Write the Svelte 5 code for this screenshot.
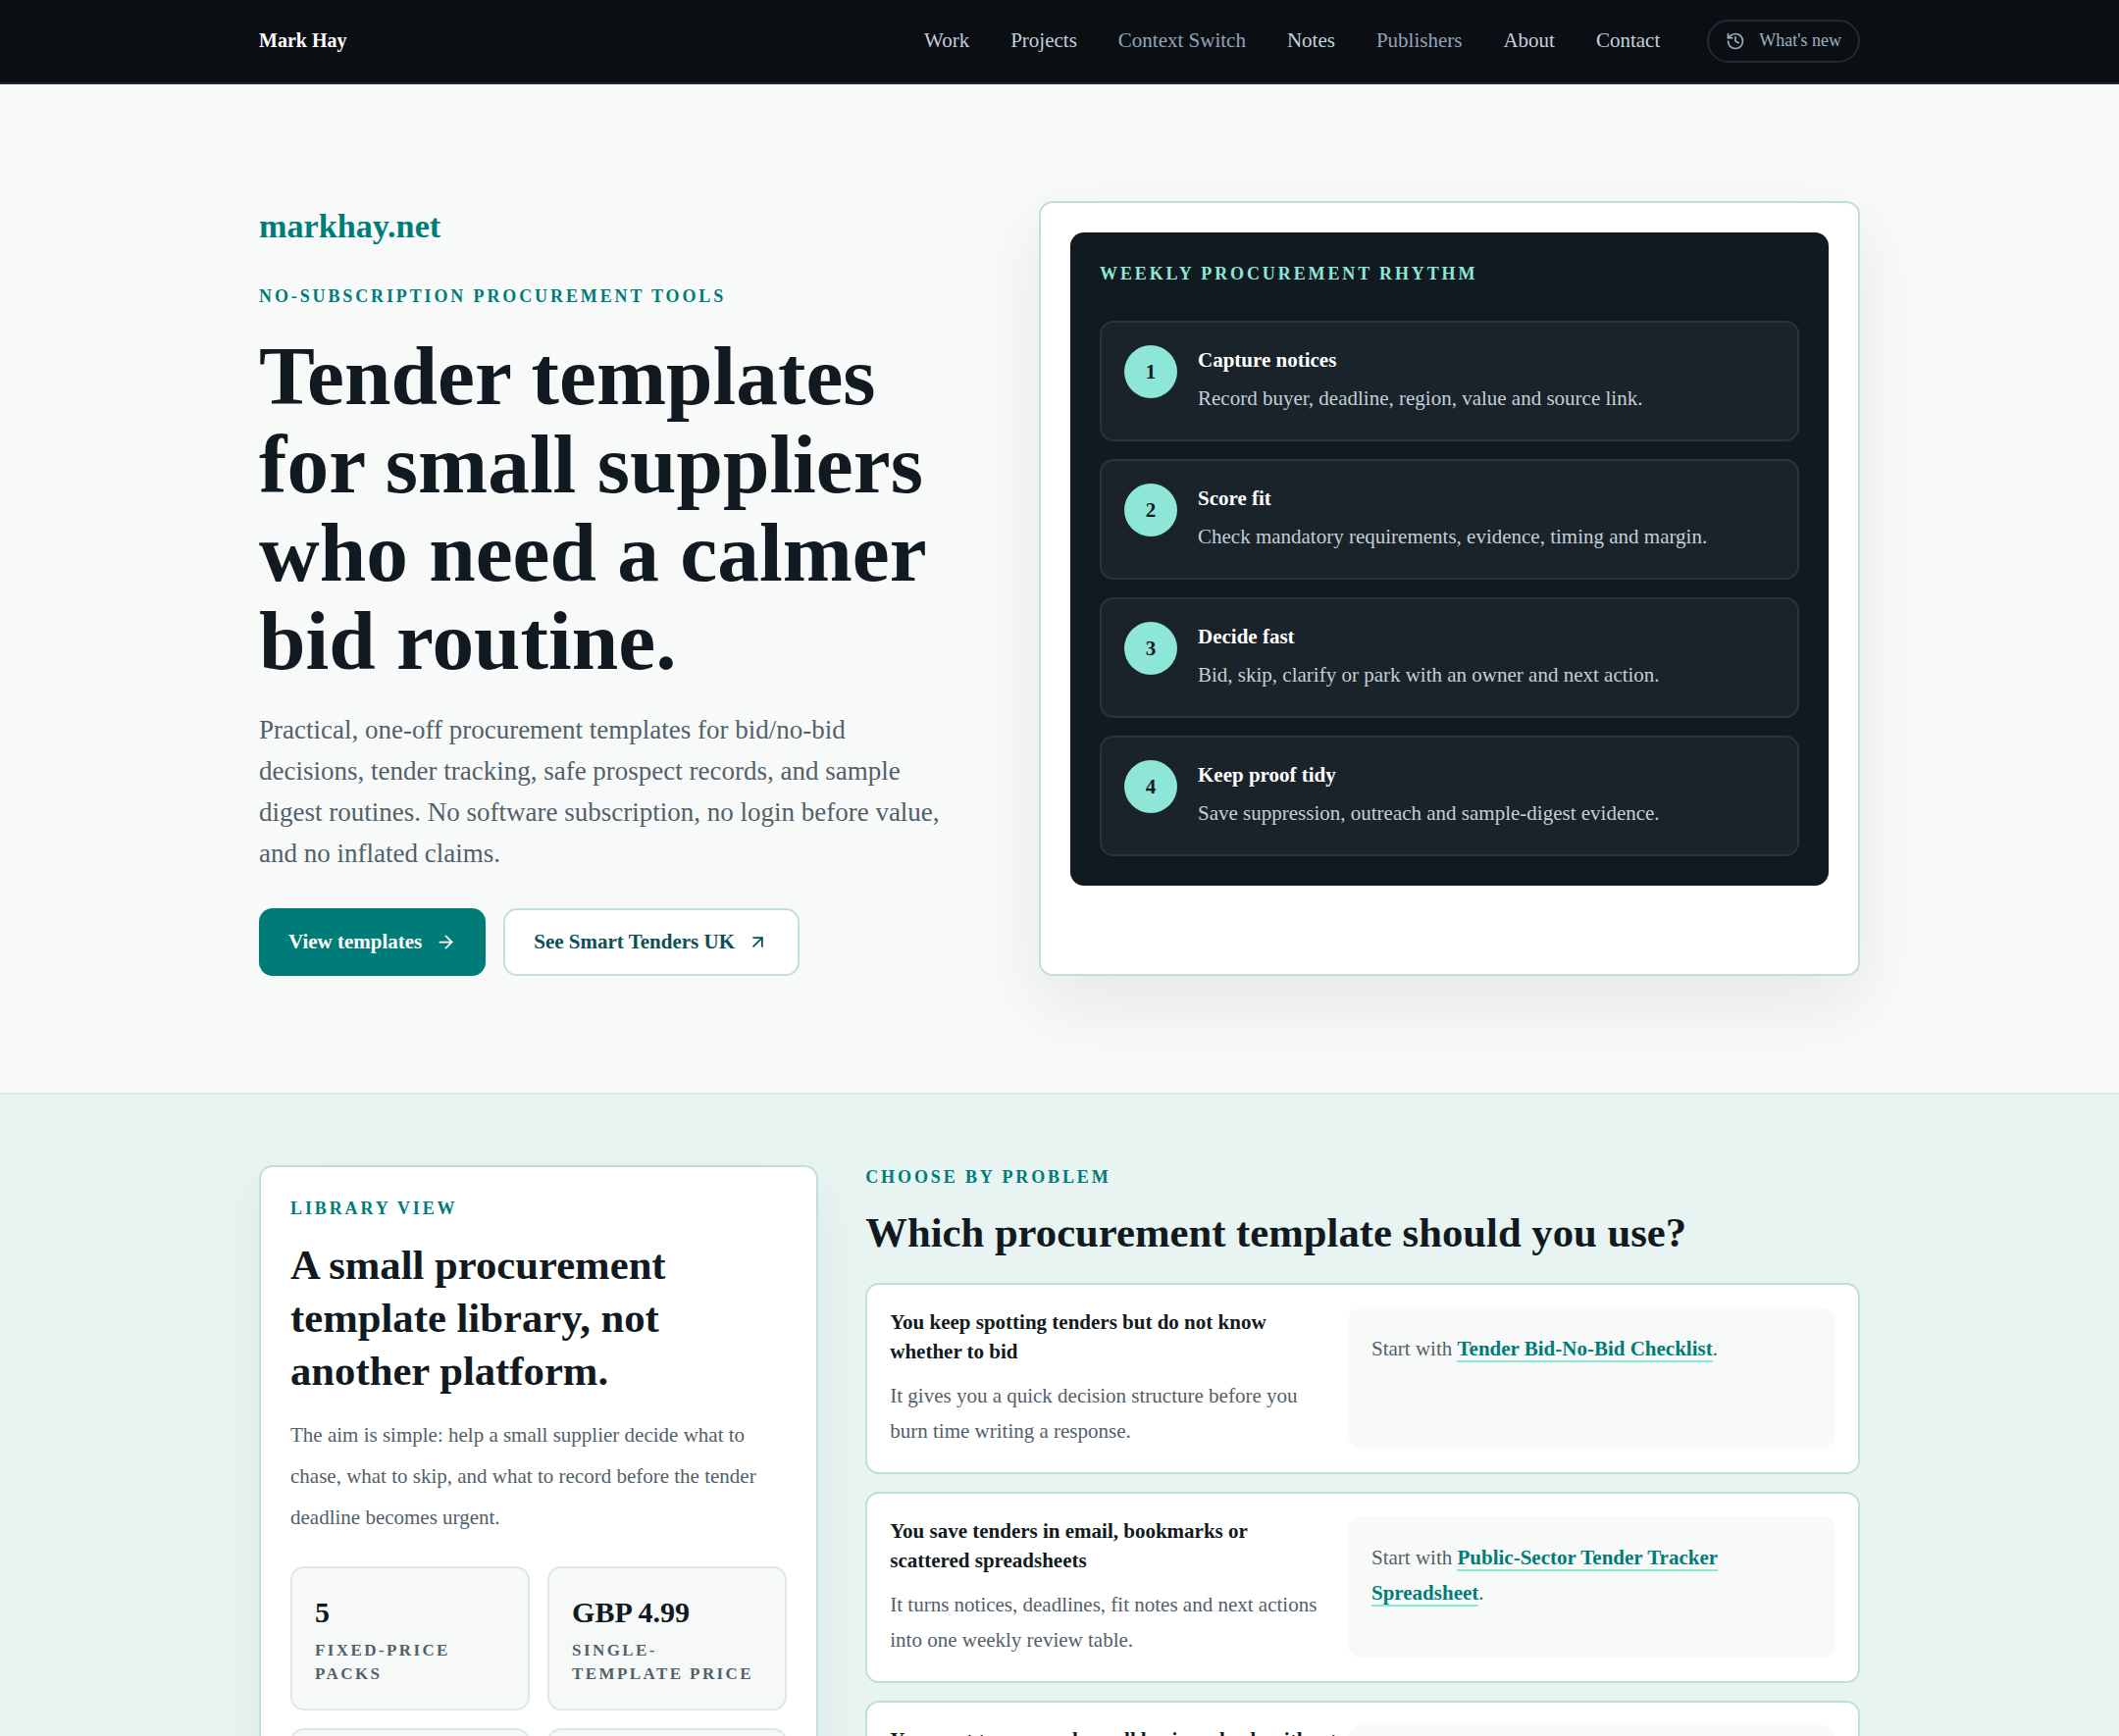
<script>
  const nav = [
    { t: 'Work', dim: false }, { t: 'Projects', dim: false }, { t: 'Context Switch', dim: true },
    { t: 'Notes', dim: false }, { t: 'Publishers', dim: true }, { t: 'About', dim: false }, { t: 'Contact', dim: false }
  ];
  const steps = [
    ['Capture notices', 'Record buyer, deadline, region, value and source link.'],
    ['Score fit', 'Check mandatory requirements, evidence, timing and margin.'],
    ['Decide fast', 'Bid, skip, clarify or park with an owner and next action.'],
    ['Keep proof tidy', 'Save suppression, outreach and sample-digest evidence.']
  ];
  const stats = [
    ['5', 'Fixed-price packs'], ['GBP 4.99', 'Single-template price'],
    ['0', 'Subscriptions'], ['1', 'Weekly routine']
  ];
</script>

<div class="page">
  <header class="top">
    <div class="wrap top-in">
      <a class="logo" href="#top">Mark Hay</a>
      <nav class="links">
        {#each nav as n}<a href="#top" class:dim={n.dim}>{n.t}</a>{/each}
      </nav>
      <a class="new" href="#top">
        <svg viewBox="0 0 24 24" width="20" height="20" fill="none" stroke="currentColor" stroke-width="2" stroke-linecap="round" stroke-linejoin="round"><path d="M3 12a9 9 0 1 0 9-9 9.75 9.75 0 0 0-6.74 2.74L3 8"/><path d="M3 3v5h5"/><path d="M12 7v5l4 2"/></svg>
        <span>What's new</span>
      </a>
    </div>
  </header>

  <section class="hero">
    <div class="wrap hero-grid">
      <div class="hero-copy">
        <div class="site">markhay.net</div>
        <div class="eyebrow">No-subscription procurement tools</div>
        <h1>Tender templates for small suppliers who need a calmer bid routine.</h1>
        <p class="lead">Practical, one-off procurement templates for bid/no-bid decisions, tender tracking, safe prospect records, and sample digest routines. No software subscription, no login before value, and no inflated claims.</p>
        <div class="actions">
          <a class="btn primary" href="#top">View templates
            <svg viewBox="0 0 24 24" width="21" height="21" fill="none" stroke="currentColor" stroke-width="2" stroke-linecap="round" stroke-linejoin="round"><path d="M5 12h14"/><path d="m12 5 7 7-7 7"/></svg>
          </a>
          <a class="btn ghost" href="#top">See Smart Tenders UK
            <svg viewBox="0 0 24 24" width="21" height="21" fill="none" stroke="currentColor" stroke-width="2" stroke-linecap="round" stroke-linejoin="round"><path d="M7 17 17 7"/><path d="M7 7h10v10"/></svg>
          </a>
        </div>
      </div>
      <div class="hero-card">
        <div class="panel">
          <div class="panel-label">Weekly procurement rhythm</div>
          <div class="steps">
            {#each steps as s, i}
              <div class="step">
                <div class="num">{i + 1}</div>
                <div>
                  <div class="step-t">{s[0]}</div>
                  <div class="step-d">{s[1]}</div>
                </div>
              </div>
            {/each}
          </div>
        </div>
      </div>
    </div>
  </section>

  <section class="lower">
    <div class="wrap lower-grid">
      <aside class="lib">
        <div class="lib-label">Library view</div>
        <h2 class="lib-h">A small procurement template library, not another platform.</h2>
        <p class="lib-p">The aim is simple: help a small supplier decide what to chase, what to skip, and what to record before the tender deadline becomes urgent.</p>
        <div class="stats">
          {#each stats as s}
            <div class="stat">
              <div class="stat-v">{s[0]}</div>
              <div class="stat-l">{s[1]}</div>
            </div>
          {/each}
        </div>
      </aside>
      <div class="choose">
        <div class="choose-label">Choose by problem</div>
        <h2 class="choose-h">Which procurement template should you use?</h2>
        <div class="rows">
          <div class="row">
            <div class="row-main">
              <div class="row-t">You keep spotting tenders but do not know whether to bid</div>
              <p class="row-d">It gives you a quick decision structure before you burn time writing a response.</p>
            </div>
            <div class="start">Start with <a href="#top">Tender Bid-No-Bid Checklist</a>.</div>
          </div>
          <div class="row">
            <div class="row-main">
              <div class="row-t">You save tenders in email, bookmarks or scattered spreadsheets</div>
              <p class="row-d">It turns notices, deadlines, fit notes and next actions into one weekly review table.</p>
            </div>
            <div class="start">Start with <a href="#top">Public-Sector Tender Tracker Spreadsheet</a>.</div>
          </div>
          <div class="row">
            <div class="row-main">
              <div class="row-t nowrap">You want to approach small business leads without</div>
            </div>
            <div class="start"></div>
          </div>
        </div>
      </div>
    </div>
  </section>
</div>

<style>
  :global(body) { margin: 0; background: #f8faf9; }
  :global(html), :global(body) { overflow: hidden; }
  .page {
    height: 1770px;
    overflow: hidden;
    font-family: "Liberation Serif", "Times New Roman", serif;
    color: #111a21;
  }
  a { text-decoration: none; color: inherit; }
  .wrap { width: 1632px; margin: 0 auto; }

  .top { background: #0b0f14; border-bottom: 2px solid #1f2a37; height: 84px; display: flex; align-items: center; }
  .top-in { display: flex; align-items: center; padding-bottom: 1px; }
  .logo { color: #fff; font-weight: 700; font-size: 20px; margin-right: auto; }
  .links { display: flex; gap: 42px; font-size: 21px; color: #c3cfdb; }
  .links a.dim { color: #94a3b8; }
  .new {
    margin-left: 48px; display: flex; align-items: center; gap: 14px; height: 44px; padding: 0 17px;
    border: 2px solid #1f2a37; border-radius: 24px; color: #9fb0c3; font-size: 18px; box-sizing: border-box;
  }

  .hero { background: #f8faf9; border-bottom: 2px solid #d9e8e4; padding: 119px 0; }
  .hero-grid { display: grid; grid-template-columns: 1fr 837px; gap: 96px; }
  .site { font-size: 34.2px; font-weight: 700; color: #007c78; line-height: 52px; }
  .eyebrow { margin-top: 33px; font-size: 18px; font-weight: 700; letter-spacing: 2.88px; text-transform: uppercase; color: #007c78; line-height: 24px; }
  h1 { margin: 24px 0 0; font-size: 85.4px; line-height: 90px; font-weight: 700; color: #111a21; }
  .lead { margin: 25px 0 0; font-size: 27px; line-height: 42px; color: #52606a; }
  .actions { display: flex; gap: 18px; margin-top: 35px; }
  .btn { display: flex; align-items: center; gap: 14px; height: 69px; padding: 0 30px; box-sizing: border-box; border-radius: 14px; font-size: 21px; font-weight: 700; }
  .primary { background: #007c78; color: #fff; }
  .ghost { background: #fff; color: #0b4f57; border: 2px solid #c2e0dc; gap: 13px; padding: 0 30px 0 29px; }

  .hero-card { background: #fff; border: 2px solid #bfe0da; border-radius: 14px; padding: 30px; box-shadow: 0 28px 70px rgba(17, 26, 33, .08); }
  .panel { background: #111a21; border-radius: 14px; padding: 30px; }
  .panel-label { font-size: 18px; font-weight: 700; letter-spacing: 2.88px; text-transform: uppercase; color: #8ee6d6; line-height: 24px; }
  .steps { display: flex; flex-direction: column; gap: 18px; margin-top: 36px; }
  .step { display: flex; gap: 21px; height: 123px; box-sizing: border-box; padding: 23px; background: #1a222a; border: 2px solid #2a343d; border-radius: 14px; }
  .num { flex: none; width: 54px; height: 54px; border-radius: 50%; background: #8ee6d6; color: #111a21; font-weight: 700; font-size: 21px; display: flex; align-items: center; justify-content: center; }
  .step-t { font-size: 21px; font-weight: 700; color: #fff; line-height: 30px; }
  .step-d { margin-top: 9px; font-size: 21px; color: #c2d0d8; line-height: 30px; }

  .lower { background: #e8f4f1; padding: 72px 0; }
  .lower-grid { display: grid; grid-template-columns: minmax(0, 0.9fr) minmax(0, 1.6fr); gap: 48px; align-items: start; }
  .lib { background: #fff; border: 2px solid #bfe0da; border-radius: 14px; padding: 30px; box-shadow: 0 20px 60px rgba(17, 26, 33, .05); }
  .lib-label, .choose-label { font-size: 18px; font-weight: 700; letter-spacing: 2.88px; text-transform: uppercase; color: #007c78; line-height: 24px; }
  .lib-h { margin: 19px 0 0; font-size: 42.7px; line-height: 54px; font-weight: 700; }
  .lib-p { margin: 17px 0 0; font-size: 21px; line-height: 42px; color: #52606a; }
  .stats { display: grid; grid-template-columns: 1fr 1fr; gap: 18px; margin-top: 29px; }
  .stat { background: #f6f9f8; border: 2px solid #dde9e6; border-radius: 14px; padding: 23px; min-height: 147px; box-sizing: border-box; }
  .stat-v { font-size: 30px; font-weight: 700; line-height: 44px; }
  .stat-l { margin-top: 5px; font-size: 17px; font-weight: 700; letter-spacing: 2.4px; text-transform: uppercase; line-height: 24px; color: #52606a; }

  .choose-h { margin: 15px 0 0; font-size: 42.7px; line-height: 60px; font-weight: 700; }
  .rows { display: flex; flex-direction: column; gap: 18px; margin-top: 21px; }
  .row { display: grid; grid-template-columns: minmax(0, 1fr) 497px; gap: 18px; padding: 23px 23px 24px; background: #fff; border: 2px solid #bfe0da; border-radius: 14px; }
  .row-main { min-width: 0; }
  .row-t { font-size: 21px; font-weight: 700; line-height: 30px; }
  .row-t.nowrap { white-space: nowrap; }
  .row-d { margin: 12px 0 0; font-size: 21px; line-height: 36px; color: #52606a; }
  .start { background: #f8faf9; border-radius: 14px; padding: 24px; font-size: 21px; line-height: 36px; color: #52606a; }
  .start a { color: #007c78; font-weight: 700; border-bottom: 2px solid #8ee6d6; }
</style>
